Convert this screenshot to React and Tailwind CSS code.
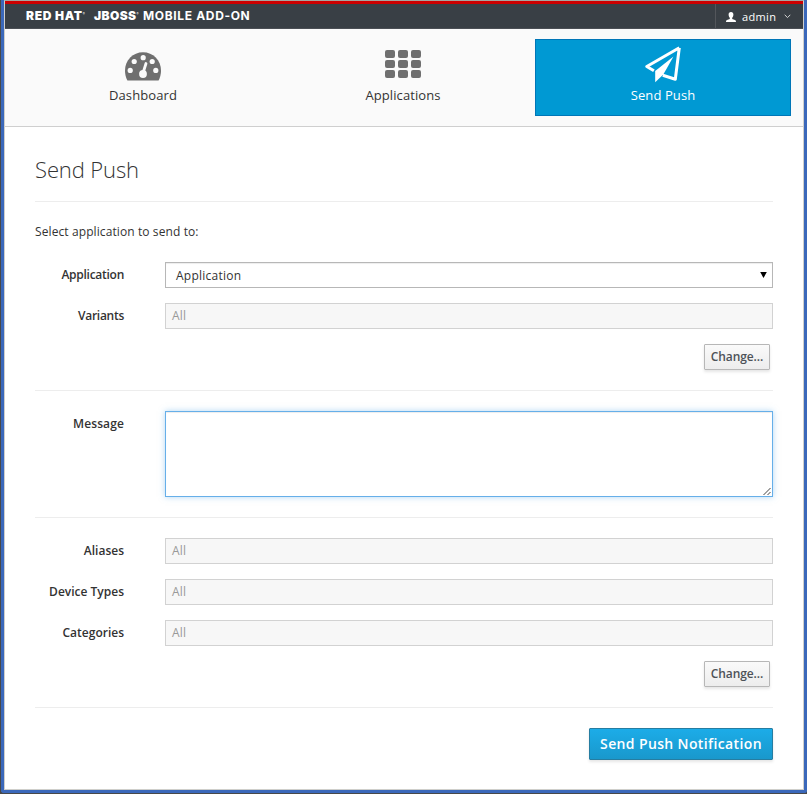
import React from "react";

const FONT = "font-['Open_Sans','Noto_Sans',sans-serif]";

function DashboardIcon() {
  return (
    <svg width="36" height="29" viewBox="0 0 36 29" className="block">
      <path d="M2.4 28.5C.8 25.500 0 22 0 18.500 0 8.300 8 .300 18 .300s18 8 18 18.200c0 3.500-.800 7-2.400 10z" fill="#6f6f6f" />
      <g fill="#fafafa">
        <circle cx="5.200" cy="18.400" r="2.600" />
        <circle cx="9.200" cy="9.500" r="2.600" />
        <circle cx="18.200" cy="5.700" r="2.600" />
        <circle cx="27.200" cy="9.500" r="2.600" />
        <circle cx="30.800" cy="18.400" r="2.600" />
        <circle cx="18" cy="22" r="3.900" />
      </g>
      <path d="M18 21 21 11.500" stroke="#fafafa" strokeWidth="2.800" strokeLinecap="round" />
    </svg>
  );
}

function GridIcon() {
  return (
    <div className="grid grid-cols-3 gap-x-[3px] gap-y-[2px] w-9">
      {[0, 1, 2, 3, 4, 5, 6, 7, 8].map((i) => (
        <span key={i} className="h-2 rounded-[2px] bg-[#6f6f6f]" />
      ))}
    </div>
  );
}

function PlaneIcon() {
  return (
    <svg width="36" height="37" viewBox="0 0 36 37" className="block">
      <path d="M34.300 1.700 1.800 20.500 8.900 24.800 M17.800 29.300 30.300 33.300 34.300 1.700" fill="none" stroke="#fff" strokeWidth="3" strokeLinejoin="round" />
      <path d="M28.500 10.500 10.200 25V36.300L18.300 28.400z" fill="#fff" />
    </svg>
  );
}

function Tab({ icon, label, active }) {
  return (
    <a className={"flex h-[77px] flex-col items-center border text-[13px] leading-[20px] " + (active ? "border-[#0076b7] bg-[#0099d3] text-white" : "border-transparent text-[#333]")}>
      <span className="flex h-[45px] items-end">{icon}</span>
      <span className="tracking-[0.1px]">{label}</span>
    </a>
  );
}

function Row({ label, children, tracking = "tracking-normal", className = "" }) {
  return (
    <div className={"flex " + className}>
      <label className={"w-[89px] mr-[41px] pt-[4px] text-right text-[12px] leading-[17px] font-semibold text-[#333] " + tracking}>{label}</label>
      {children}
    </div>
  );
}

function All() {
  return (
    <div className="h-[26px] flex-1 border border-[#d2d2d2] bg-[#f7f7f7] px-1.5 text-[12px] leading-[23px] tracking-[0.2px] text-[#999]">All</div>
  );
}

function Change() {
  return (
    <div className="mt-[15px] mr-[3px] flex justify-end">
      <button className="h-[26px] w-[66px] rounded-[1px] border border-[#b7b7b7] bg-linear-to-b from-[#fafafa] to-[#ededed] text-[12px] leading-[22px] font-semibold tracking-[-0.1px] text-[#4d5258] shadow-[0_2px_3px_rgba(0,0,0,0.1)] whitespace-nowrap">Change...</button>
    </div>
  );
}

function Rule() {
  return <div className="mt-5 mb-5 h-px bg-[#ededed]" />;
}

export default function App() {
  return (
    <div className={"flex h-[794px] w-[807px] flex-col bg-[#484848] pl-px pb-px " + FONT}>
      <div className="flex flex-1 rounded-b-[3px] border-x-[3px] border-b-[3px] border-[#3b68ba]">
        <div className="flex flex-1 flex-col border border-t-[#a5a5a0] border-x-[#cfcfcb] border-b-[#cfcfcb] bg-white">
          <header className="flex h-7 justify-between border-t-[3px] border-b border-t-[#c00] border-b-[#4b4f55] bg-[#393f45] text-white">
            <div className="flex pl-[21px] font-['Inter',sans-serif] text-[12px] leading-[23px] whitespace-nowrap">
              <span className="w-[68px] font-black tracking-[0.65px]">RED HAT<sup className="-top-[5px] text-[3px] font-normal">®</sup></span>
              <span className="w-[49px] font-black tracking-[0.4px]">JBOSS<sup className="-top-[5px] text-[3px] font-normal">®</sup></span>
              <span className="font-bold tracking-[0.65px]">MOBILE ADD-ON</span>
            </div>
            <div className="flex w-[88px] items-center border-l border-[#53565b] pl-[10px] text-[11px] leading-[24px]">
              <svg width="10" height="10" viewBox="0 0 10 10" className="mt-px mr-[6px]" fill="#fff">
                <path d="M5 0c1.600 0 2.400 1 2.400 2.500C7.400 4 6.800 5.200 6.200 5.700V7L9 8c.7.300 1 .8 1 2H0c0-1.200.3-1.700 1-2l2.800-1V5.700C3.200 5.200 2.600 4 2.600 2.500 2.600 1 3.400 0 5 0z" />
              </svg>
              <span className="pt-px tracking-[0.35px]">admin</span>
              <svg width="7" height="5" viewBox="0 0 7 5" className="ml-[8px]" fill="none" stroke="#d5d5d5"><path d="m.7.800 2.800 2.800L6.300.800" /></svg>
            </div>
          </header>
          <nav className="grid h-[98px] grid-cols-[256px_256px_256px] gap-x-1 border-b border-[#cfcfcf] bg-[#fafafa] px-[10px] pt-[10px]">
            <Tab label="Dashboard" icon={<span className="pb-[4px]"><DashboardIcon /></span>} />
            <Tab label="Applications" icon={<span className="pb-[7px]"><GridIcon /></span>} />
            <Tab label="Send Push" active icon={<span className="pb-[2px]"><PlaneIcon /></span>} />
          </nav>
          <main className="flex flex-col px-[30px] pt-[26px] text-[#333]">
            <h1 className="h-[48px] text-[22px] leading-[32px] font-light tracking-[-0.12px]">Send Push</h1>
            <div className="h-px bg-[#ededed]" />
            <p className="mt-[20px] mb-[20px] h-5 text-[12px] leading-5 tracking-[0.1px]">Select application to send to:</p>
            <Row label="Application" tracking="tracking-[-0.27px]">
              <div className="flex h-[26px] flex-1 items-center justify-between border border-[#b7b7b7] bg-white pr-[5px] pl-[10px] text-[12px] leading-6 shadow-[inset_0_1px_1px_rgba(0,0,0,0.075)]">
                <span className="pt-[2px] tracking-[0.25px]">Application</span>
                <svg width="7" height="6" viewBox="0 0 7 6"><path d="M.2 0h6.600L3.500 6z" fill="#000" /></svg>
              </div>
            </Row>
            <Row label="Variants" tracking="tracking-[-0.27px]" className="mt-[15px]"><All /></Row>
            <Change />
            <Rule />
            <Row label="Message" tracking="tracking-[0.12px]">
              <div className="flex h-[86px] flex-1 items-end justify-end border border-[#66afe9] bg-white shadow-[inset_0_1px_1px_rgba(0,0,0,0.075),0_0_6px_rgba(102,175,233,0.5)]">
                <svg width="9" height="9" viewBox="0 0 9 9" fill="none" stroke="#444"><path d="M.5 8 7.500 1M4.500 8l3-3" /></svg>
              </div>
            </Row>
            <Rule />
            <Row label="Aliases"><All /></Row>
            <Row label="Device Types" className="mt-[15px]"><All /></Row>
            <Row label="Categories" className="mt-[15px]"><All /></Row>
            <Change />
            <Rule />
            <button className="h-8 w-[184px] self-end rounded-[1px] border border-[#267da1] bg-linear-to-b from-[#1cace8] to-[#1998cc] text-[14px] leading-[28px] font-semibold tracking-[0.37px] whitespace-nowrap text-white shadow-[0_2px_3px_rgba(0,0,0,0.1)]">Send Push Notification</button>
          </main>
        </div>
      </div>
    </div>
  );
}
